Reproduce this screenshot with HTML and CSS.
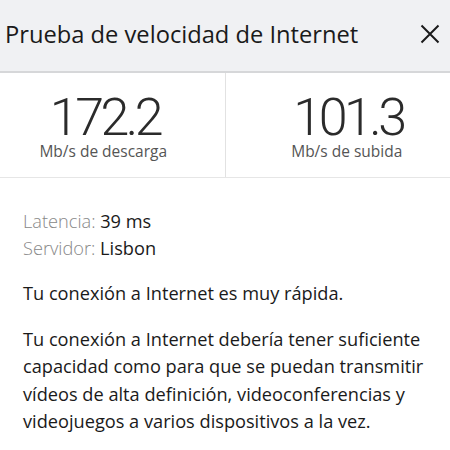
FILE: index.html
```html
<!DOCTYPE html>
<html>
<head>
  <title>Prueba de velocidad de Internet</title>
  <link rel="stylesheet" href="styles.css">
</head>
<body>
  <div class="header">
    <h1 class="title">Prueba de velocidad de Internet</h1>
    <button class="close" aria-label="Cerrar">
      <svg width="20" height="20" viewBox="0 0 20 20">
        <path d="M1.5 1.5 L18.5 18.5 M18.5 1.5 L1.5 18.5" stroke="#1a1a1a" stroke-width="2" fill="none"/>
      </svg>
    </button>
  </div>

  <div class="stats">
    <div class="stat">
      <div class="stat-value">172.2</div>
      <div class="stat-label">Mb/s de descarga</div>
    </div>
    <div class="divider"></div>
    <div class="stat">
      <div class="stat-value">101.3</div>
      <div class="stat-label">Mb/s de subida</div>
    </div>
  </div>

  <div class="details">
    <div class="info"><span class="info-key">Latencia:</span> 39 ms</div>
    <div class="info"><span class="info-key">Servidor:</span> Lisbon</div>
    <p class="summary">Tu conexión a Internet es muy rápida.</p>
    <p class="description">Tu conexión a Internet debería tener suficiente capacidad como para que se puedan transmitir vídeos de alta definición, videoconferencias y videojuegos a varios dispositivos a la vez.</p>
  </div>
</body>
</html>
```

FILE: styles.css
```css
body {
  margin: 0;
  font-family: 'Open Sans', 'Noto Sans', sans-serif;
  color: #1a1a1a;
  background-color: #fff;
}

.header {
  display: flex;
  align-items: center;
  justify-content: space-between;
  height: 67px;
  padding: 0 10px 4px 5px;
  background-color: #f0f1f3;
  border-bottom: 2px solid #d6d7d9;
}

.title {
  margin: 0;
  font-size: 23.7px;
  font-weight: 400;
}

.close {
  border: none;
  background: none;
  padding: 0;
  display: flex;
}

.stats {
  display: grid;
  grid-template-columns: 1fr 1px 1fr;
  column-gap: 18px;
  height: 104px;
  border-bottom: 1px solid #e6e6e6;
}

.divider {
  background-color: #e2e2e2;
}

.stat {
  display: flex;
  flex-direction: column;
  align-items: center;
  padding-top: 21px;
}

.stat-value {
  font-family: Roboto, sans-serif;
  font-size: 52px;
  font-weight: 300;
  line-height: 47px;
  letter-spacing: -3.5px;
  margin-right: -3.5px;
  color: #2b2b2b;
}

.stat-label {
  font-size: 15.5px;
  line-height: 20px;
  color: #555;
}

.details {
  padding: 30px 8px 0 23px;
  font-size: 18.2px;
}

.info {
  line-height: 27px;
}

.info-key {
  color: #888;
  font-weight: 300;
}

.summary {
  margin: 18px 0 0;
  line-height: 27px;
}

.description {
  margin: 19px 0 0;
  line-height: 27.3px;
}
```
